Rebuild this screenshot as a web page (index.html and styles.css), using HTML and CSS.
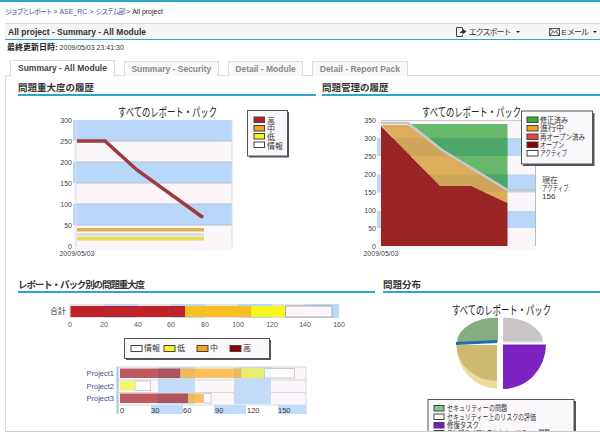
FILE: index.html
```html
<!DOCTYPE html>
<html lang="ja">
<head>
    <meta charset="UTF-8">
    <meta name="viewport" content="width=device-width, initial-scale=1.0">
    <title>All project - Summary - All Module</title>
    <link rel="stylesheet" href="styles.css">
</head>
<body>

<div class="top-rule"></div>

<div class="crumbs">
    <a class="crumb-ja" href="#">ジョブとレポート</a> &gt; <a href="#">ASE_RC</a> &gt; <a class="crumb-ja" href="#">システム部</a> &gt; <span class="crumb-current">All project</span>
</div>

<div class="title-bar">
    <div class="title-text">All project - Summary - All Module</div>
    <div class="title-action action-export">
        <svg class="action-icon" width="11" height="10" viewBox="0 0 11 10"><path d="M6.5 2.5V.5h-6v9h6V8" fill="none" stroke="#444"/><path d="M3.5 6l3-3V1.5l4 3-4 3V6z" fill="#333"/></svg>
        <span class="action-ja">エクスポート</span><span class="caret"></span>
    </div>
    <div class="title-action action-mail">
        <svg class="action-icon" width="11" height="8" viewBox="0 0 11 8"><rect x=".5" y=".5" width="10" height="7" fill="#eee" stroke="#555"/><path d="M.5 .5l5 4 5-4M.5 7.5l3.5-4M10.5 7.5l-3.5-4" fill="none" stroke="#555"/></svg>
        <span class="action-ja">E メール</span><span class="caret"></span>
    </div>
</div>

<div class="updated"><b>最終更新日時:</b> 2009/05/03 23:41:30</div>

<div class="tabs">
    <div class="tab active">Summary - All Module</div>
    <div class="tab">Summary - Security</div>
    <div class="tab">Detail - Module</div>
    <div class="tab">Detail - Report Pack</div>
</div>

<div class="panel">
    <div class="report-row row-top">
        <section class="report report-severity">
            <h2>問題重大度の履歴</h2>
            <svg class="chart" width="298" height="177" viewBox="18 96 298 177">
                <text class="chart-title" x="118" y="117" textLength="99" lengthAdjust="spacingAndGlyphs">すべてのレポート・パック</text>
                <rect x="73" y="120" width="159" height="131" fill="#faf6fa"/>
                <rect x="73" y="120" width="159" height="21" fill="#b9d7f8"/>
                <rect x="73" y="162" width="159" height="21" fill="#b9d7f8"/>
                <rect x="73" y="204" width="159" height="21" fill="#b9d7f8"/>
                <path d="M76 141H232M76 183H232M76 225H232M76 162H232M76 204H232" stroke="#b8c0cc"/>
                <path d="M76 120V247M232 120V247" stroke="#ddd"/>
                <g class="tick">
                    <text x="72" y="123">300</text><text x="72" y="144">250</text><text x="72" y="165">200</text>
                    <text x="72" y="186">150</text><text x="72" y="207">100</text><text x="72" y="228">50</text><text x="72" y="249">0</text>
                </g>
                <text class="tick-date" x="77" y="256">2009/05/03</text>
                <rect x="77" y="228" width="127" height="3.5" fill="#e2ae55"/>
                <rect x="77" y="233" width="127" height="3.5" fill="#ddd"/>
                <rect x="77" y="237" width="127" height="3.5" fill="#e6dd4e"/>
                <path d="M77 141H105L137 170L203 217.5" fill="none" stroke="#9c3a40" stroke-width="3.5"/>
                <rect x="249" y="112" width="40" height="45.5" fill="#555"/>
                <rect x="247.5" y="110.5" width="40" height="45.5" fill="#fbf8fb" stroke="#555"/>
                <rect x="254" y="117" width="10.5" height="5.5" fill="#b2242c" stroke="#444"/>
                <rect x="254" y="125.5" width="10.5" height="5.5" fill="#f3a21d" stroke="#444"/>
                <rect x="254" y="133.5" width="10.5" height="5.5" fill="#f5f51d" stroke="#444"/>
                <rect x="254" y="142" width="10.5" height="5.5" fill="#fff" stroke="#444"/>
                <g class="legend-text">
                    <text x="267" y="124">高</text><text x="267" y="132">中</text><text x="267" y="140">低</text><text x="267" y="149">情報</text>
                </g>
            </svg>
        </section>

        <section class="report report-management">
            <h2>問題管理の履歴</h2>
            <svg class="chart" width="278" height="177" viewBox="322 96 278 177">
                <text class="chart-title" x="422" y="117" textLength="99" lengthAdjust="spacingAndGlyphs">すべてのレポート・パック</text>
                <rect x="377" y="120" width="158" height="131" fill="#faf6fa"/>
                <rect x="377" y="138" width="158" height="18" fill="#b9d7f8"/>
                <rect x="377" y="174.5" width="158" height="18" fill="#b9d7f8"/>
                <rect x="377" y="211" width="158" height="17" fill="#b9d7f8"/>
                <path d="M381 120.5H535" stroke="#ccc"/>
                <path d="M535.5 120V246" stroke="#bbb"/>
                <g class="tick">
                    <text x="376" y="123">350</text><text x="376" y="141">300</text><text x="376" y="159">250</text>
                    <text x="376" y="177">200</text><text x="376" y="195">150</text><text x="376" y="213">100</text>
                    <text x="376" y="231">50</text><text x="376" y="249">0</text>
                </g>
                <text class="tick-date" x="381" y="256">2009/05/03</text>
                <path d="M408 124H507.5V190L442 150z" fill="#68b86c"/>
                <path d="M426 138H507.5V156H452L442 150z" fill="#4ba869"/>
                <path d="M482 174.5H507.5V190z" fill="#4ba869"/>
                <path d="M381 125H408L442 150L507.5 190V203L471 186H440z" fill="#dcae5c"/>
                <path d="M393 138H426L442 150L452 156H410.5z" fill="#cfa55c"/>
                <path d="M428.7 174.5H482L507.5 190V192H484L471 186H440z" fill="#cfa55c"/>
                <path d="M381 126L440 186H471L507.5 203V246H381z" fill="#992423"/>
                <path d="M381 123H408L442 150L507.5 190H535" fill="none" stroke="#c8c8cc" stroke-width="2.5"/>
                <rect x="523" y="113" width="71.5" height="53" fill="#555"/>
                <rect x="521.5" y="111" width="71" height="53" fill="#fbf8fb" stroke="#555"/>
                <rect x="527" y="117" width="11" height="5.5" fill="#2eb136" stroke="#444"/>
                <rect x="527" y="125.5" width="11" height="5.5" fill="#f3a21d" stroke="#444"/>
                <rect x="527" y="134" width="11" height="5.5" fill="#ef3f48" stroke="#444"/>
                <rect x="527" y="142" width="11" height="5.5" fill="#8e0000" stroke="#444"/>
                <rect x="527" y="150.5" width="11" height="5.5" fill="#fff" stroke="#444"/>
                <g class="legend-text">
                    <text x="540" y="123" textLength="28" lengthAdjust="spacingAndGlyphs">修正済み</text>
                    <text x="540" y="131" textLength="24" lengthAdjust="spacingAndGlyphs">進行中</text>
                    <text x="540" y="140" textLength="45" lengthAdjust="spacingAndGlyphs">再オープン済み</text>
                    <text x="540" y="148" textLength="24" lengthAdjust="spacingAndGlyphs">オープン</text>
                    <text x="540" y="156" textLength="27" lengthAdjust="spacingAndGlyphs">アクティブ</text>
                </g>
                <g class="legend-text">
                    <text x="542" y="183">現在</text>
                    <text x="542" y="191" textLength="28" lengthAdjust="spacingAndGlyphs">アクティブ:</text>
                    <text x="542" y="199">156</text>
                </g>
            </svg>
        </section>
    </div>

    <div class="report-row row-bottom">
        <section class="report report-pack">
            <h2 class="heading-tight">レポート・パック別の問題重大度</h2>
            <svg class="chart" width="357" height="138" viewBox="18 293 357 138">
                <rect x="69" y="304" width="270" height="14" fill="#e4e2e6"/>
                <rect x="104" y="304" width="34" height="14" fill="#b9d7f8"/>
                <rect x="171" y="304" width="34" height="14" fill="#b9d7f8"/>
                <rect x="238" y="304" width="34" height="14" fill="#b9d7f8"/>
                <rect x="305" y="304" width="34" height="14" fill="#b9d7f8"/>
                <rect x="70.5" y="306" width="114.5" height="11" fill="#bd2327"/>
                <rect x="185" y="306" width="66.5" height="11" fill="#f8bf21"/>
                <rect x="251.5" y="306" width="34" height="11" fill="#f8f51f"/>
                <rect x="285.5" y="306" width="46.5" height="11" fill="#fbf6fa" stroke="#aaa"/>
                <text class="label-end" x="66" y="314">合計</text>
                <g class="tick-mid">
                    <text x="70" y="327">0</text><text x="104" y="327">20</text><text x="138" y="327">40</text>
                    <text x="171" y="327">60</text><text x="205" y="327">80</text><text x="238" y="327">100</text>
                    <text x="272" y="327">120</text><text x="305" y="327">140</text><text x="339" y="327">160</text>
                </g>
                <rect x="126" y="340" width="145" height="20" fill="#555"/>
                <rect x="124.5" y="338.5" width="145" height="20" fill="#fbf8fb" stroke="#555"/>
                <rect x="131" y="345.5" width="11" height="6" fill="#fff" stroke="#444"/>
                <rect x="164" y="345.5" width="11" height="6" fill="#f5f51d" stroke="#444"/>
                <rect x="197" y="345.5" width="11" height="6" fill="#f3a21d" stroke="#444"/>
                <rect x="230" y="345.5" width="11" height="6" fill="#8e0000" stroke="#444"/>
                <g class="legend-text">
                    <text x="144" y="351">情報</text><text x="177" y="351">低</text><text x="210" y="351">中</text><text x="243" y="351">高</text>
                </g>
                <rect x="117" y="367" width="189" height="37" fill="#faf6fa"/>
                <rect x="158" y="367" width="37" height="37" fill="#c0dcfa"/>
                <rect x="234" y="367" width="37" height="37" fill="#c0dcfa"/>
                <path d="M117 367H306M117 380H306M117 392.5H306M117 405H306M306 367V414" stroke="#d8d8de"/>
                <path d="M117.5 367V414" stroke="#aac4e0" stroke-width="2"/>
                <rect x="264.5" y="368.5" width="30" height="9.5" fill="#fff" fill-opacity=".75" stroke="#ccc"/>
                <rect x="135" y="381" width="15.5" height="9.5" fill="#fff" stroke="#ccc"/>
                <rect x="203.5" y="393.5" width="7.5" height="9.5" fill="#fff" stroke="#ccc"/>
                <g opacity=".75">
                    <rect x="120" y="368.5" width="60.5" height="9.5" fill="#a8272c"/>
                    <rect x="180.5" y="368.5" width="61" height="9.5" fill="#fdaf2a"/>
                    <rect x="241.5" y="368.5" width="22.5" height="9.5" fill="#f5f53a"/>
                    <rect x="120" y="393.5" width="68" height="9.5" fill="#a8272c"/>
                    <rect x="188" y="393.5" width="15" height="9.5" fill="#fdaf2a"/>
                    <rect x="120" y="381" width="15" height="9.5" fill="#f5f53a"/>
                </g>
                <rect x="151" y="405" width="32" height="9" fill="#c0dcfa"/>
                <rect x="214" y="405" width="32" height="9" fill="#c0dcfa"/>
                <rect x="278" y="405" width="28" height="9" fill="#c0dcfa"/>
                <g class="project-label">
                    <text x="114" y="376"><a href="#">Project1</a></text>
                    <text x="114" y="389"><a href="#">Project2</a></text>
                    <text x="114" y="401"><a href="#">Project3</a></text>
                </g>
                <g class="axis-text">
                    <text x="120" y="412.5">0</text><text x="151" y="412.5">30</text><text x="183" y="412.5">60</text>
                    <text x="215" y="412.5">90</text><text x="247" y="412.5">120</text><text x="278" y="412.5">150</text>
                </g>
            </svg>
        </section>

        <section class="report report-dist">
            <h2>問題分布</h2>
            <svg class="chart" width="217" height="138" viewBox="383 293 217 138">
                <text class="chart-title" x="452" y="315" textLength="99" lengthAdjust="spacingAndGlyphs">すべてのレポート・パック</text>
                <path d="M498 317.5A41 25 0 0 0 457 342H498z" fill="#86ac82"/>
                <path d="M503 317.5A40 25 0 0 1 543 342H503z" fill="#c9c5c9"/>
                <path d="M503 342H543" stroke="#e4e2e6"/>
                <path d="M456 343.5L497 341.5" stroke="#1b6fb0" stroke-width="3"/>
                <path d="M456.5 346H497V388.5A41 43 0 0 1 456.5 346z" fill="#ecdd9f"/>
                <path d="M456.5 345H497V381A41 36 0 0 1 456.5 345z" fill="#cdb96f"/>
                <path d="M503 344.5H546A43 44.5 0 0 1 503 389z" fill="#7b22c0"/>
                <rect x="430" y="401" width="146" height="32" fill="#555"/>
                <rect x="428" y="399.5" width="146" height="32" fill="#fbf8fb" stroke="#555"/>
                <rect x="434" y="405.5" width="10" height="5.5" fill="#86c48f" stroke="#444"/>
                <rect x="434" y="414" width="10" height="5.5" fill="#fff" stroke="#444"/>
                <rect x="434" y="422.5" width="10" height="5.5" fill="#7b16d8" stroke="#444"/>
                <rect x="434" y="430.5" width="10" height="5.5" fill="#ecdc8e" stroke="#444"/>
                <g class="legend-text">
                    <text x="447" y="411" textLength="60" lengthAdjust="spacingAndGlyphs">セキュリティーの問題</text>
                    <text x="447" y="420" textLength="89" lengthAdjust="spacingAndGlyphs">セキュリティー上のリスクの評価</text>
                    <text x="447" y="428" textLength="32" lengthAdjust="spacingAndGlyphs">修復タスク</text>
                    <text x="447" y="436" textLength="103" lengthAdjust="spacingAndGlyphs">コンプライアンスとセキュリティー問題</text>
                </g>
            </svg>
        </section>
    </div>
</div>

</body>
</html>
```

FILE: styles.css
```css
body {
    font-family: "Liberation Sans", "Noto Sans CJK JP", sans-serif;
    margin: 0;
    height: 437px;
    overflow: hidden;
    background-color: #fff;
    color: #333;
}

a {
    color: #3a5a9c;
    text-decoration: none;
}

.top-rule {
    height: 2px;
    background-color: #2ea7c4;
}

.crumbs {
    height: 21px;
    padding-left: 5px;
    font-size: 7px;
    line-height: 19px;
    color: #444;
}

.crumb-ja {
    letter-spacing: -1.2px;
}

.crumb-current {
    color: #222;
}

.title-bar {
    display: flex;
    align-items: center;
    height: 15px;
    margin-left: 5px;
    border-top: 1px solid #ddd;
    border-bottom: 1px solid #2ea7c4;
    background-color: #f6f4f6;
}

.title-text {
    flex: 1;
    padding-left: 3px;
    font-weight: bold;
    font-size: 8.5px;
    color: #333;
}

.title-action {
    display: flex;
    align-items: center;
    gap: 2px;
    font-size: 8px;
    color: #333;
}

.action-ja {
    letter-spacing: -1px;
}

.action-export {
    margin-right: 29px;
}

.action-mail {
    gap: 1px;
    margin-right: 3px;
}

.caret {
    width: 0;
    height: 0;
    margin-left: 4px;
    border-left: 2px solid transparent;
    border-right: 2px solid transparent;
    border-top: 2px solid #222;
}

.updated {
    height: 20px;
    padding-left: 7px;
    font-size: 7px;
    line-height: 16px;
    color: #333;
}

.updated b {
    color: #222;
    font-size: 8px;
}

.tabs {
    display: flex;
    gap: 9px;
    height: 16px;
    margin-left: 10px;
    margin-bottom: -1px;
    position: relative;
    z-index: 1;
}

.tab {
    height: 14px;
    margin-top: 1px;
    padding: 0 6.5px;
    border: 1px solid #ddd;
    border-bottom: 0;
    background-color: #faf8fa;
    font-size: 8.5px;
    font-weight: bold;
    line-height: 14px;
    color: #888;
}

.tab.active {
    height: 16px;
    margin-top: 0;
    padding: 0 7px;
    background-color: #fff;
    color: #444;
}

.panel {
    height: 357px;
    margin-left: 5px;
    border-top: 1px solid #ddd;
    border-left: 1px solid #ddd;
    border-bottom: 1px solid #ccc;
    box-sizing: border-box;
    overflow: hidden;
}

.report-row {
    display: flex;
    padding-left: 12px;
    padding-top: 2px;
    overflow: hidden;
    box-sizing: border-box;
}

.row-top {
    height: 197px;
    gap: 6px;
}

.row-bottom {
    height: 158px;
    gap: 8px;
}

.report {
    flex: none;
}

.report h2 {
    height: 18px;
    margin: 0;
    box-sizing: border-box;
    border-bottom: 2px solid #2ea7c4;
    font-size: 9.5px;
    line-height: 20px;
    font-weight: bold;
    color: #333;
}

.report .heading-tight {
    letter-spacing: -1.1px;
}

.chart {
    display: block;
}

.chart text {
    font-family: "Liberation Sans", "Noto Sans CJK JP", sans-serif;
}

.chart-title {
    font-size: 12px;
    fill: #222;
}

.tick text {
    font-size: 7px;
    text-anchor: end;
    fill: #444;
}

.tick-date {
    font-size: 7px;
    text-anchor: middle;
    fill: #444;
}

.tick-mid text {
    font-size: 7px;
    text-anchor: middle;
    fill: #555;
}

.legend-text text {
    font-size: 8px;
    fill: #333;
}

.label-end {
    font-size: 8px;
    text-anchor: end;
    fill: #333;
}

.project-label text {
    font-size: 7.5px;
    text-anchor: end;
}

.project-label a {
    fill: #3f4f8f;
}

.axis-text text {
    font-size: 7.5px;
    fill: #333;
}
```
